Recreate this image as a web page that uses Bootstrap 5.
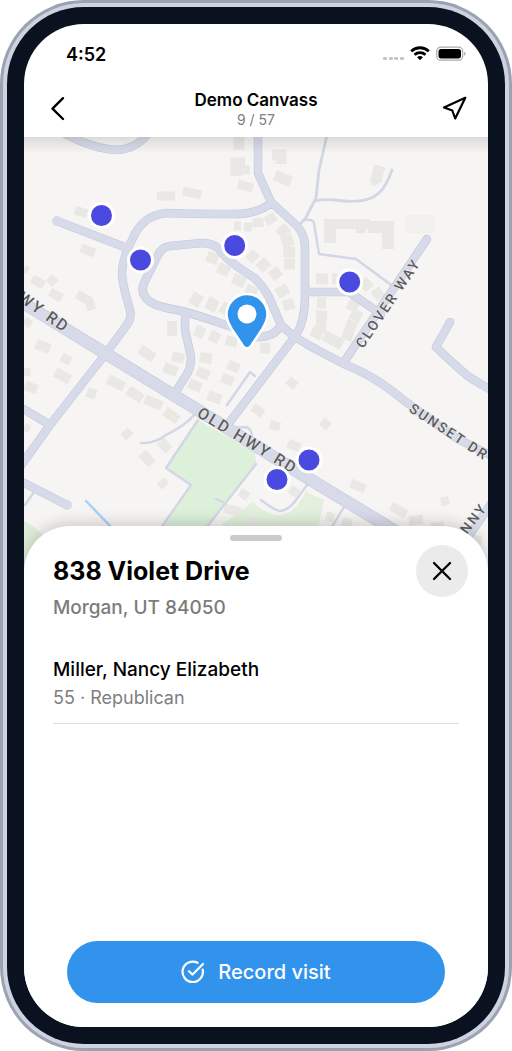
<!DOCTYPE html>
<html lang="en">
<head>
<meta charset="utf-8">
<meta name="viewport" content="width=device-width, initial-scale=1">
<title>Demo Canvass</title>
<link href="https://cdn.jsdelivr.net/npm/bootstrap@5.3.0/dist/css/bootstrap.min.css" rel="stylesheet">
<style>
  body { font-family: Inter, "Liberation Sans", sans-serif; background: #fff; color: #000; }
  .bezel-outer { background: #9ca2b1; border-radius: 84px; padding: 3px; }
  .bezel-inner { background: #ced3e1; border-radius: 81px; padding: 4px; }
  .bezel-dark { background: #0b121f; border-radius: 77px; padding: 17px; }
  .phone-screen { background: #fff; border-radius: 60px; overflow: hidden; }
  .status-row { padding: 16px 22px 0 42px; height: 61px; }
  .status-time { font-size: 18px; line-height: 29px; font-weight: 600; }
  .title-row { height: 52px; padding: 0 18px; }
  .title-row h1 { font-size: 17px; line-height: 22px; font-weight: 600; }
  .title-row p { font-size: 14px; line-height: 18px; color: #808080; }
  .icon-btn { width: 30px; height: 46px; color: #000; }
  .map-area { flex: 0 0 433px; background: #f6f5f4; }
  .map-area::before { content: ""; position: absolute; inset: 0 0 auto; height: 16px; background: linear-gradient(rgba(0,0,0,.11), transparent); z-index: 1; }
  .road-label { font-family: Roboto, sans-serif; font-size: 14px; font-weight: 500; letter-spacing: 2px; fill: #5c5c5c; stroke: #f3f3f5; stroke-width: 1px; paint-order: stroke; }
  .road-label-main { font-size: 16px; }
  .sheet { margin-top: -44px; border-radius: 46px 46px 0 0; background: #fff; padding: 9px 20px 24px 29px; box-shadow: 0 -2px 16px rgba(0,0,0,.2); z-index: 2; }
  .grabber { width: 52px; height: 6px; background: #cbcbcb; margin-right: 9px; }
  .sheet h2 { font-size: 25px; line-height: 36px; font-weight: 700; }
  .place { font-size: 19px; line-height: 37px; font-weight: 500; color: #7c7c7c; }
  .close-btn { width: 52px; height: 52px; background: #ebebeb; color: #000; }
  .voter { margin: 30px 9px 0 0; padding-bottom: 11px; border-bottom: 1px solid #dedede; }
  .voter h3 { font-size: 19px; line-height: 28px; font-weight: 500; }
  .voter p { font-size: 18px; line-height: 28px; color: #808080; }
  .record-btn { margin: 0 23px 0 14px; height: 62px; gap: 13px; background: #3193ec; color: #fff; font-size: 20px; font-weight: 500; }
  .record-btn:hover { background: #2784da; color: #fff; }
</style>
</head>
<body>
<div class="bezel-outer min-vh-100 d-flex">
<div class="bezel-inner flex-fill d-flex">
<div class="bezel-dark flex-fill d-flex">
<main class="phone-screen flex-fill d-flex flex-column">
  <div class="status-row d-flex justify-content-between align-items-start">
    <div class="status-time">4:52</div>
    <svg width="84" height="28" viewBox="0 0 84 28" aria-hidden="true">
      <g fill="#c6c6c6"><rect x="1" y="17" width="4" height="3" rx="1"/><rect x="7" y="17" width="4" height="3" rx="1"/><rect x="12" y="17" width="4" height="3" rx="1"/><rect x="18" y="17" width="4" height="3" rx="1"/></g>
      <g fill="none" stroke="#000" stroke-width="2.8"><path d="M29.200 11.200a13 13 0 0 1 17.600 0"/><path d="M32.500 14.800a8.200 8.200 0 0 1 11 0"/></g>
      <path d="M38 20.200l-2.900-3a4.400 4.400 0 0 1 5.800 0z"/>
      <rect x="54.700" y="7.200" width="26" height="13" rx="4" fill="none" stroke="#aaa" stroke-width="1.200"/>
      <rect x="56.500" y="9" width="22.500" height="9.400" rx="2.600"/>
      <path d="M82.200 11.700c1.800.5 1.800 3.500 0 4z" fill="#aaa"/>
    </svg>
  </div>
  <header class="title-row d-flex justify-content-between align-items-start">
    <button class="icon-btn btn p-0 border-0 d-flex align-items-center justify-content-center" type="button" aria-label="Back">
      <svg width="30" height="30" viewBox="0 0 30 30" fill="none" stroke="#000" stroke-width="2.400" stroke-linecap="round" stroke-linejoin="round"><path d="M21 5.200L10.500 15.700 21 26"/></svg>
    </button>
    <div class="text-center pt-1">
      <h1 class="m-0">Demo Canvass</h1>
      <p class="m-0">9 / 57</p>
    </div>
    <button class="icon-btn btn p-0 border-0 d-flex align-items-center justify-content-center" type="button" aria-label="Locate me">
      <svg width="30" height="30" viewBox="0 0 30 30" fill="none" stroke="#000" stroke-width="2.200" stroke-linejoin="round"><path d="M25.300 4.800L4 14.500l8.300 3L15.200 25.500z"/></svg>
    </button>
  </header>

  <section class="map-area position-relative overflow-hidden" aria-label="Map">
    <svg class="d-block w-100 h-100" viewBox="24 137 464 433" preserveAspectRatio="xMidYMin slice">
      <rect x="24" y="137" width="464" height="433" fill="#f6f5f4"/>
      <!-- parks -->
      <g fill="#dcf0da">
        <path d="M198 420L255 453l1 10-48 62v8H157l34-48-25-17z"/>
        <path d="M222 524l31-22q15 14 28 13t25-23l18 8-6 30h-96z" fill="#e2f0dd"/>
        <path d="M24 521q25 12 38 49H24z" fill="#dfeeda"/>
      </g>
      <!-- buildings -->
      <g fill="none" stroke="#e9e8e4">
        <path stroke-width="9" d="M157 196h18M183 191l18 4M75 210l12 4M81 248l14 5M240 170h10M238 184l15 4M234 226h7M244 227h8M32 279l12 6M49 284l6-7M50 292l12 6M77 294l12 7 3 9"/>
        <path stroke-width="11" d="M239 137v13M236 176v-13h9M207 256l11 4M218 267l11 5M233 278l12 5M246 289l11 4M193 305l6-11M209 310l6-11M223 314l6-10"/>
        <path stroke-width="11" d="M272 155h9v9M275 175l16 7M378 184l-2-4 4-14M258 227v-9M268 215l5 8M279 235l9-8M282 243l11-4M283 252h12M284 264h11M249 253l7 7M259 269l9-8M271 277l9-7M277 294l11-6M283 306l11-3M316 279h12M332 279h8M362 288l8-7M374 297l8-6M317 303h9M316 316h11M316 327h10M348 303l10 5M351 313l10 5M346 324l10 4M343 333l10 4M312 330l10 6M324 335l18 10M260 348h10"/>
        <path stroke-width="10" d="M324 224h46M361 221v12"/><path stroke-width="12" d="M330 219v24M388 221v28M368 227h26"/>
        <path stroke="#f1f0ee" stroke-width="18" d="M406 224h28"/>
        <path stroke-width="10" d="M36 344l14 5M64 363l4-8M55 372l15 8M25 385l12 5M108 379l16 8M128 390l14 9M145 399l17 7M165 411l13 9M87 392l9 3M124 431l6 6M142 453l10 11M160 441l9 9M160 481l6 5M140 349l14 9M172 336v-15M172 356l12 3M164 367l13 5M197 337l5-10M212 342l5-10M226 340l11 3M200 357l12 2M197 371l12 5M189 383l12 5M208 395l13 5M228 364l11 5M222 377l11 5"/>
        <path stroke-width="9" d="M288 380l8 6M253 407l10 7M270 424l10 3M322 421l7 6M288 443l12 5M351 483l14 6M441 502l8-2M391 506l15 8M409 521l14-2M431 528l13-2M326 516l8 2M342 522l10 2M290 489l8 5M240 492l8 5M224 508l17 4M250 522h9M473 540h9"/>
        <path stroke-width="8" d="M24 268l4 3M24 320l7 5M26 368l1 8M24 427l6 2"/>
      </g>
      <!-- lanes -->
      <g fill="none" stroke="#d2d6e5" stroke-width="2.400" stroke-linejoin="round" stroke-linecap="round">
        <path d="M327 135L319 170l-3 28-11 21-5 5M315 201q8-2 20-1 31 5 44-7 7-6 13-23" stroke-width="2.800"/>
        <path d="M304 220q9-1 10 3l5 31 37 5 38 28"/>
        <path d="M141 443q13 1 25-8 20-10 28-20M198 420l-32 48 25 17-35 50M256 464l-53 68M216 499l7 3M227 405l23-33 5 4M234 428l12-1q6 2 6 10M261 500q10 8 18 11 9 0 17-11l11-15M330 530l14-23M25 505l9-13"/>
      </g>
      <!-- streets: casing first, then fill -->
      <defs>
        <g id="streets" fill="none" stroke-linecap="round" stroke-linejoin="round">
          <path d="M65 134Q94 149 117 150q18-1 30-15M57 221l70 27M271 203q-13 11-38 11-40 0-66-1-25 2-35 27-10 18-10 35 1 12 8 35 2 9-4 16l-19 26-57 73-30 42M20 407l30 18M20 481l47 24M202 243l-32 3q-8 1-12 9l-12 24q-8 13 3 22 8 6 28 9 11 2 43 13l20 7M202 243q14 0 20 10 7 9 31 24 8 6 16 20l12 28 13 12M250 337q24 2 31-12M258 130v43l13 29 26 24q8 9 8 21v50q0 24-9 38l-70 92M305 292h44l32 22M281 325q14 14 42 28l23 12q29 11 60 37l50 36 36 18M427 239l-83 123M450 322l-14 25q14 14 33 30l25 15M185 315v15l5 22q3 11-3 22l-12 19M495 498l-40 58"/>
        </g>
      </defs>
      <use href="#streets" stroke="#c3c8dc" stroke-width="8.500"/>
      <path d="M15 298L193 407l113 70 134 81" fill="none" stroke="#c3c8dc" stroke-width="12.500"/>
      <use href="#streets" stroke="#d7dae8" stroke-width="7.300"/>
      <path d="M15 298L193 407l113 70 134 81" fill="none" stroke="#d7dae8" stroke-width="11.300"/>
      <circle cx="57" cy="221" r="5" fill="#d7dae8"/><circle cx="67" cy="505" r="5" fill="#d7dae8"/>
      <path d="M86 501l30 31" stroke="#a9d1f7" stroke-width="2.500" stroke-linecap="round"/>
      <!-- street names -->
      <text class="road-label road-label-main" transform="translate(17 300) rotate(35)">WY RD</text>
      <text class="road-label road-label-main" transform="translate(196 416) rotate(31)">OLD HWY RD</text>
      <text class="road-label" transform="translate(363 349) rotate(-56)">CLOVER WAY</text>
      <text class="road-label" transform="translate(408 411) rotate(33)">SUNSET DR</text>
      <text class="road-label" transform="translate(467 535) rotate(-52)">NNY</text>
      <!-- households -->
      <g fill="#4b4ae0" stroke="#fff" stroke-width="3">
        <circle cx="101.500" cy="215.500" r="12"/><circle cx="140.500" cy="260" r="12"/><circle cx="234.700" cy="245.500" r="12"/>
        <circle cx="349.700" cy="282" r="12"/><circle cx="309" cy="460" r="12"/><circle cx="277" cy="479.500" r="12"/>
      </g>
      <path d="M247 348.500c-2.500 0-4-2-5-4l-10-15c-3-5-5.500-9-5.500-15a20.500 20.500 0 0 1 41 0c0 6-2.500 10-5.500 15l-10 15c-1 2-2.500 4-5 4z" fill="#3193ec" stroke="#fff" stroke-width="2.500"/>
      <circle cx="247" cy="314" r="9.500" fill="#fff"/>
    </svg>
  </section>

  <section class="sheet position-relative flex-fill d-flex flex-column">
    <div class="grabber rounded-pill align-self-center"></div>
    <div class="d-flex justify-content-between align-items-start pt-1">
      <div class="pt-2">
        <h2 class="m-0">838 Violet Drive</h2>
        <p class="place m-0">Morgan, UT 84050</p>
      </div>
      <button class="close-btn btn rounded-circle border-0 p-0 d-flex align-items-center justify-content-center" type="button" aria-label="Close">
        <svg width="20" height="20" viewBox="0 0 20 20" stroke="#000" stroke-width="2.300" stroke-linecap="round"><path d="M2 2l16 16M18 2L2 18"/></svg>
      </button>
    </div>
    <article class="voter">
      <h3 class="m-0">Miller, Nancy Elizabeth</h3>
      <p class="m-0">55 · Republican</p>
    </article>
    <button class="record-btn btn rounded-pill border-0 mt-auto d-flex align-items-center justify-content-center" type="button">
      <svg width="24" height="24" viewBox="0 0 24 24" fill="none" stroke="#fff" stroke-width="2.200" stroke-linecap="round" stroke-linejoin="round"><path d="M21.700 9.600A10.200 10.200 0 1 1 16.500 2.800M8 11.200l3.600 3.400L22 4"/></svg>
      Record visit
    </button>
  </section>
</main>
</div>
</div>
</div>
<script src="https://cdn.jsdelivr.net/npm/bootstrap@5.3.0/dist/js/bootstrap.bundle.min.js"></script>
</body>
</html>
